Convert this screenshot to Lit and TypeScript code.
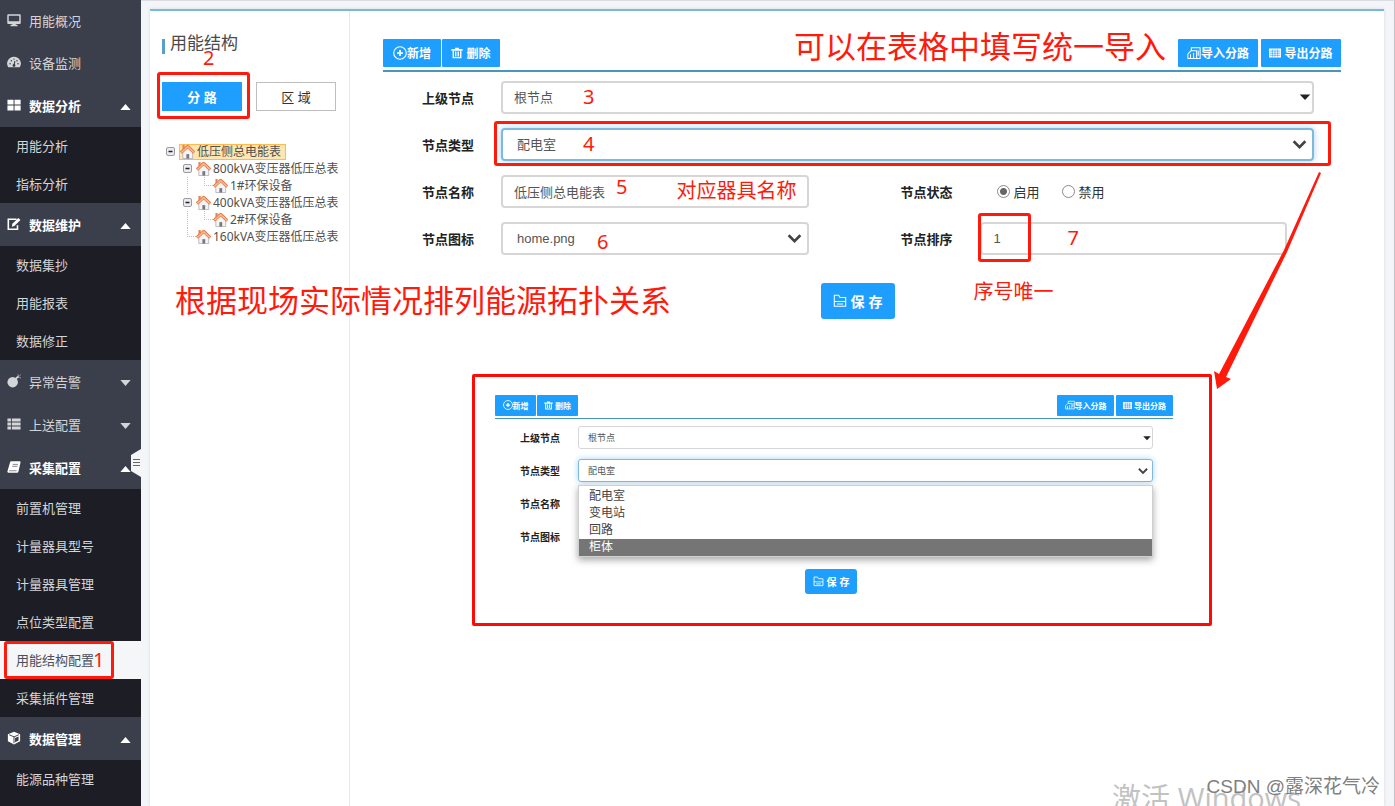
import { LitElement, html, css, svg, nothing } from "lit";
import { customElement, property } from "lit/decorators.js";
import { classMap } from "lit/directives/class-map.js";

const icons: Record<string, unknown> = {
  monitor: svg`<path d="M1.500 1.500h13a1.200 1.200 0 0 1 1.200 1.200v8.600a1.200 1.200 0 0 1-1.200 1.200h-4.500v1h2V15h-8v-1.500h2v-1H1.500A1.200 1.200 0 0 1 .3 11.300V2.700a1.200 1.200 0 0 1 1.200-1.200zM2 3.200v6.300h12V3.200z" fill="currentColor" fill-rule="evenodd"/>`,
  gauge: svg`<path d="M8 2a7.800 7.800 0 0 0-6.600 12h13.200A7.800 7.800 0 0 0 8 2z" fill="currentColor"/><path d="M8 12l1-5" stroke="#3b3e4b" stroke-width="1.300"/><circle cx="8" cy="12" r="1.600" fill="#3b3e4b"/><g fill="#3b3e4b"><circle cx="3.500" cy="10" r=".9"/><circle cx="5" cy="6.500" r=".9"/><circle cx="8" cy="4.700" r=".8"/><circle cx="11.400" cy="6.500" r=".9"/><circle cx="12.600" cy="10" r=".9"/></g>`,
  windows: svg`<path d="M.5 2h7v5.500h-7zM8.600 2h7v5.500h-7zM.5 8.700h7v5.500h-7zM8.600 8.700h7v5.500h-7z" fill="currentColor"/>`,
  edit: svg`<path d="M11 2.500H1.500v11.500H12V9.500" fill="none" stroke="currentColor" stroke-width="1.800"/><path d="M5.500 11l.6-3.200L13 1l2.400 2.400-7 7z" fill="currentColor"/>`,
  bomb: svg`<circle cx="6.500" cy="9.300" r="6" fill="currentColor"/><path d="M10 5.500l2-2 1.500-.3" fill="none" stroke="currentColor" stroke-width="2"/><path d="M12.500 .5l.5 1.500M15.500 1l-1.300 1.200M15.700 4.500l-1.500-.6" stroke="currentColor"/>`,
  list: svg`<path d="M.5 1.800H4.500v3.400h-4zM5.500 1.800h10v3.400h-10zM.5 6.300h4v3.400h-4zM5.500 6.300h10v3.400h-10zM.5 10.800h4v3.400h-4zM5.500 10.800h10v3.400h-10z" fill="currentColor"/>`,
  book: svg`<path d="M5 1.500h9.500a1 1 0 0 1 1 1.200L13 13.500a1.500 1.500 0 0 1-1.500 1H2a1.500 1.500 0 0 1-1.400-2L3.500 2.500A1.500 1.500 0 0 1 5 1.500z" fill="currentColor"/><path d="M6.500 5h6M6 7.200h6M2.500 12.300h8.500" stroke="#3b3e4b" stroke-width=".7"/>`,
  cube: svg`<path d="M8 .8l7 2.800v8.200l-7 3.600-7-3.600V3.600z" fill="currentColor"/><path d="M2.500 4.300L8 6.700l5.500-2.400M8 6.700V14" fill="none" stroke="#3b3e4b" stroke-width="1.100"/><path d="M9.200 8l4-1.800v4.600l-4 2z" fill="#3b3e4b"/>`,
  plus: svg`<circle cx="8" cy="8" r="7.200" fill="none" stroke="currentColor" stroke-width="1.300"/><path d="M8 4.700v6.600M4.700 8h6.600" stroke="currentColor" stroke-width="2"/>`,
  trash: svg`<path d="M5.500 2.500V1h5v1.500H15.500v2.500H.5V2.500z" fill="currentColor"/><path d="M3 4.500v9.700h10V4.500M6.300 6v6.500M9.700 6v6.500" fill="none" stroke="currentColor" stroke-width="1.800"/>`,
  import: svg`<path d="M5 5V2h10v12.300h-3.500M1 14.300V9l3.500-3.500H11v8.800zM4 14V9.500M7.500 14V8M12.800 5v6" fill="none" stroke="currentColor" stroke-width="1.200"/>`,
  table: svg`<path d="M0 2h16v12H0z" fill="currentColor"/><path d="M1 5.500h14M1 8.300h14M1 11.100h14M4.500 3v10M8 3v10M11.500 3v10" fill="none" stroke="#1e9fff" stroke-width=".8"/>`,
  save: svg`<path d="M1.500 14V1.500h5L8 4h6.500v10zM1.500 8.500h13M4.500 11.500h7" fill="none" stroke="currentColor" stroke-width="1.200"/>`,
  home: svg`<path d="M3 8v7.500h10.500V8L8.200 3.500z" fill="#f4f4f6" stroke="#a9a9b5" stroke-width=".8"/><path d="M6.800 15.500v-4.700h3v4.700z" fill="#77777f"/><path d="M1 9.200L8.200 2.600l7 6.600" fill="none" stroke="#dd7444" stroke-width="3.400" stroke-linejoin="round"/><path d="M1.400 8.900L8.200 2.700l6.600 6.200" fill="none" stroke="#fbb58a" stroke-width="1.800"/><path d="M2.600 1h2.400v3.400l-2.400 2z" fill="#e58554"/>`,
  down: svg`<path d="M2.500 5L8 10.500 13.500 5" fill="none" stroke="#444" stroke-width="2.500"/>`,
  caret: svg`<path d="M2 5h12l-6 6.500z" fill="#222"/>`,
};

const icon = (name: string, cls = "icon") =>
  html`<svg class=${cls} viewBox="0 0 16 16" aria-hidden="true">${icons[name]}</svg>`;

interface Group {
  icon: string;
  label: string;
  state?: "open" | "closed";
  items?: string[];
}

const MENU: Group[] = [
  { icon: "monitor", label: "用能概况" },
  { icon: "gauge", label: "设备监测" },
  { icon: "windows", label: "数据分析", state: "open", items: ["用能分析", "指标分析"] },
  { icon: "edit", label: "数据维护", state: "open", items: ["数据集抄", "用能报表", "数据修正"] },
  { icon: "bomb", label: "异常告警", state: "closed" },
  { icon: "list", label: "上送配置", state: "closed" },
  {
    icon: "book",
    label: "采集配置",
    state: "open",
    items: ["前置机管理", "计量器具型号", "计量器具管理", "点位类型配置", "用能结构配置", "采集插件管理"],
  },
  { icon: "cube", label: "数据管理", state: "open", items: ["能源品种管理"] },
];

const TREE = [
  { level: 0, label: "低压侧总电能表", branch: true },
  { level: 1, label: "800kVA变压器低压总表", branch: true },
  { level: 2, label: "1#环保设备", branch: false },
  { level: 1, label: "400kVA变压器低压总表", branch: true },
  { level: 2, label: "2#环保设备", branch: false },
  { level: 1, label: "160kVA变压器低压总表", branch: false },
];

const base = css`
  * {
    box-sizing: border-box;
  }
  button,
  input,
  select {
    font: inherit;
    margin: 0;
  }
  .icon {
    width: 14px;
    height: 14px;
    flex: none;
  }
  .box {
    position: absolute;
    border: 3px solid #ff1a0c;
    border-radius: 3px;
    pointer-events: none;
  }
  .note {
    position: absolute;
    color: #ff1a0c;
    font-family: "Noto Sans", "Noto Sans CJK SC", sans-serif;
    font-size: 20px;
    font-weight: 400;
    line-height: 28px;
    white-space: nowrap;
    pointer-events: none;
  }
`;

@customElement("side-nav")
export class SideNav extends LitElement {
  static styles = [
    base,
    css`
      :host {
        display: block;
        position: relative;
        width: 141px;
        flex: none;
        background: #1d1e25;
        font-size: 13px;
        color: #d4d5d8;
      }
      ul {
        list-style: none;
        margin: 0;
        padding: 0;
      }
      .menu > li:first-child .head {
        height: 41px;
      }
      .head {
        display: flex;
        align-items: center;
        width: 100%;
        height: 43px;
        padding: 0 10px 1px 7px;
        gap: 8px;
        border: 0;
        background: #3b3e4b;
        color: inherit;
        text-align: left;
      }
      .head.open {
        color: #fff;
        font-weight: 700;
      }
      .label {
        flex: 1;
      }
      .tri {
        width: 11px;
        height: 6px;
        margin-top: 3px;
      }
      .link {
        display: flex;
        align-items: center;
        position: relative;
        height: 38px;
        padding: 0 0 1px 16px;
        color: inherit;
        text-decoration: none;
      }
      .link.active {
        background: #f5f6f8;
        color: #4a4f5e;
      }
      .link .box {
        inset: 0 27px 0 4px;
      }
      .link .note {
        left: 93px;
        top: 5px;
      }
      .handle {
        position: absolute;
        right: 0;
        top: 449px;
        width: 10px;
        height: 28px;
        padding: 0;
        border: 0;
        background: none;
      }
      .handle svg {
        display: block;
      }
    `,
  ];

  render() {
    return html`<nav>
        <ul class="menu">
          ${MENU.map(
            (g) => html`<li>
              <button class=${classMap({ head: true, open: g.state === "open" })}>
                ${icon(g.icon)}<span class="label">${g.label}</span>
                ${g.state
                  ? html`<svg class="tri" viewBox="0 0 12 7" aria-hidden="true">
                      <path d=${g.state === "open" ? "M0 7h12L6 0z" : "M0 0h12L6 7z"} fill="currentColor" />
                    </svg>`
                  : nothing}
              </button>
              ${g.items
                ? html`<ul>
                    ${g.items.map((t) => {
                      const active = t === "用能结构配置";
                      return html`<li>
                        <a href="#" class=${classMap({ link: true, active })}
                          >${t}${active
                            ? html`<span class="box"></span><span class="note">1</span>`
                            : nothing}</a
                        >
                      </li>`;
                    })}
                  </ul>`
                : nothing}
            </li>`,
          )}
        </ul>
      </nav>
      <button class="handle" aria-label="收起菜单">
        <svg width="10" height="28" viewBox="0 0 10 28">
          <path d="M10 0v28L0 22V6z" fill="#f5f6f8" />
          <path d="M2 10.500h7M2 13.500h7M2 16.500h7" stroke="#666" />
        </svg>
      </button>`;
  }
}

@customElement("structure-tree")
export class StructureTree extends LitElement {
  static styles = [
    base,
    css`
      :host {
        display: block;
        width: 200px;
        flex: none;
        padding: 23px 0 0 12px;
        border-right: 1px solid #e9eaee;
      }
      h1 {
        display: flex;
        align-items: center;
        gap: 5px;
        margin: 0;
        font-size: 17px;
        font-weight: 400;
        line-height: 20px;
        color: #4a4a4a;
      }
      h1::before {
        content: "";
        width: 3px;
        height: 15px;
        margin-top: 4px;
        background: #5a9fc8;
      }
      .tabs {
        display: flex;
        gap: 14px;
        margin-top: 28px;
      }
      .tab {
        position: relative;
        width: 80px;
        height: 29px;
        padding: 0;
        border: 1px solid #bfbfbf;
        background: #fff;
        color: #333;
        font-size: 13px;
      }
      .tab.on {
        border-color: #1e9fff;
        background: #1e9fff;
        color: #fff;
        font-weight: 700;
      }
      .tab .box {
        inset: -11px -9px -9px -6px;
      }
      .tab .note {
        left: 40px;
        top: -39px;
      }
      ul {
        list-style: none;
        margin: 32px 0 0 4px;
        padding: 0;
        font: 12px/17px "Noto Sans", "Noto Sans CJK SC", sans-serif;
        color: #505050;
      }
      li {
        display: flex;
        align-items: center;
        height: 17px;
      }
      .pad {
        width: 17px;
        height: 17px;
        flex: none;
      }
      .pad.line {
        width: 4px;
        margin-right: 12px;
        border-right: 1px dotted #c0c0c8;
        box-sizing: content-box;
      }
      .toggle {
        width: 13px;
        height: 17px;
        flex: none;
      }
      .node {
        display: flex;
        align-items: center;
        gap: 2px;
        height: 17px;
        padding: 0 4px 0 0;
        border: 0;
        background: none;
        color: inherit;
        white-space: nowrap;
      }
      .node.sel {
        height: 16px;
        border: 1px solid #ffb951;
        padding: 0 4px 0 0;
        background: #ffe6b0;
      }
      .node .icon {
        width: 15px;
        height: 15px;
      }
    `,
  ];

  render() {
    return html`<h1>用能结构</h1>
      <div class="tabs">
        <button class="tab on">分 路<span class="box"></span><span class="note">2</span></button>
        <button class="tab">区 域</button>
      </div>
      <ul>
        ${TREE.map(
          (n) => html`<li>
            ${Array.from(
              { length: n.level },
              (_, i) => html`<span class=${classMap({ pad: true, line: n.level === 2 && i === 1 })}></span>`,
            )}
            <svg class="toggle" viewBox="0 0 13 17" aria-hidden="true">
              ${n.branch
                ? svg`<rect x=".5" y="4.500" width="8" height="8" rx="1.500" fill="#ececf0" stroke="#9a9aa2"/><path d="M2.500 8.500h4" stroke="#222" stroke-width="1.500"/>`
                : svg`<path d="M4.500 0v9M4 8.500h9" fill="none" stroke="#c0c0c8" stroke-dasharray="1 1"/>`}
            </svg>
            <button class=${classMap({ node: true, sel: n.level === 0 })}>${icon("home")}${n.label}</button>
          </li>`,
        )}
      </ul>`;
  }
}

@customElement("node-toolbar")
export class NodeToolbar extends LitElement {
  @property({ type: Boolean, reflect: true }) compact = false;

  static styles = [
    base,
    css`
      :host {
        display: flex;
        justify-content: space-between;
        padding-bottom: 3px;
        border-bottom: 2px solid #4796bd;
      }
      .group {
        display: flex;
        gap: 1px;
      }
      .group.wide {
        gap: 3px;
      }
      button {
        display: flex;
        align-items: center;
        justify-content: center;
        width: 58px;
        height: 28px;
        padding: 0 0 1px;
        border: 0;
        border-radius: 1px;
        background: #1e9fff;
        color: #fff;
        font-size: 12px;
        font-weight: 700;
        white-space: nowrap;
      }
      .wide button {
        width: 80px;
      }
      .spaced {
        gap: 3px;
      }
      .spaced .icon {
        width: 12px;
        height: 12px;
      }
      :host([compact]) {
        padding-bottom: 2px;
        border-bottom-width: 1px;
      }
      :host([compact]) button {
        width: 41px;
        height: 21px;
        font-size: 8px;
      }
      :host([compact]) .wide {
        gap: 2px;
      }
      :host([compact]) .wide button {
        width: 57px;
      }
      :host([compact]) .spaced {
        gap: 2px;
      }
      :host([compact]) .icon {
        width: 10px;
        height: 10px;
      }
      :host([compact]) .spaced .icon {
        width: 9px;
        height: 9px;
      }
    `,
  ];

  render() {
    return html`<div class="group">
        <button>${icon("plus")}新增</button>
        <button class="spaced">${icon("trash")}删除</button>
      </div>
      <div class="group wide">
        <button>${icon("import")}导入分路</button>
        <button class="spaced">${icon("table")}导出分路</button>
      </div>`;
  }
}

@customElement("app-root")
export class AppRoot extends LitElement {
  static styles = [
    base,
    css`
      :host {
        display: flex;
        position: relative;
        height: 100vh;
        overflow: hidden;
        background: #f4f5f8;
        font-family: "Liberation Sans", "Noto Sans CJK SC", sans-serif;
        font-size: 13px;
        color: #333;
      }
      .page {
        flex: 1;
        min-width: 0;
        display: flex;
        padding: 8px 10px 0 9px;
        border-top: 1px solid #dcdde2;
        border-right: 1px solid #c4c4c8;
      }
      .card {
        flex: 1;
        min-width: 0;
        display: flex;
        border-top: 2px solid #78bbd9;
        background: #fff;
        box-shadow: 0 0 3px #d5d8e0;
      }
      main {
        flex: 1;
        min-width: 0;
        position: relative;
        padding: 28px 43px 0 33px;
      }
      .form {
        display: grid;
        gap: 14px;
        margin-top: 9px;
      }
      .row {
        display: grid;
        grid-template-columns: 118px 1fr 27px;
        align-items: center;
      }
      .row.half {
        grid-template-columns: 118px 1fr 171px 1fr 54px;
      }
      .label {
        padding-right: 27px;
        text-align: right;
        font-weight: 700;
        color: #222;
      }
      .field {
        position: relative;
        height: 33px;
      }
      .control {
        display: block;
        width: 100%;
        height: 100%;
        padding: 0 12px;
        border: 2px solid #d6d6d6;
        border-radius: 4px;
        outline: 0;
        appearance: none;
        background: #fff;
        color: #555;
      }
      select.control {
        padding: 0 14px;
      }
      select.control.first,
      .control.first {
        padding: 0 11px;
      }
      .control.focus {
        border-color: #7fb9e0;
        box-shadow: 0 0 6px #a9d4f2;
      }
      .arrow {
        position: absolute;
        right: 6px;
        top: 8px;
        width: 17px;
        height: 17px;
        pointer-events: none;
      }
      .arrow.small {
        right: 2px;
        top: 9px;
        width: 14px;
        height: 14px;
      }
      .radios {
        display: flex;
        align-items: center;
        gap: 22px;
        height: 33px;
        padding-left: 17px;
      }
      .radios label {
        display: flex;
        align-items: center;
        gap: 4px;
      }
      .radios input {
        appearance: none;
        width: 13px;
        height: 13px;
        border: 1px solid #8a8a8a;
        border-radius: 50%;
        background: #fff;
      }
      .radios input:checked {
        background: radial-gradient(#666 0 3px, #fff 4px);
      }
      .save {
        display: flex;
        align-items: center;
        justify-content: center;
        gap: 4px;
        width: 74px;
        height: 36px;
        margin: 28px auto 0;
        padding: 0;
        border: 0;
        border-radius: 3px;
        background: #1e9fff;
        color: #fff;
        font-size: 14px;
        font-weight: 700;
      }
      .actions {
        padding-right: 9px;
      }
      .field .box.type {
        inset: -7px -17px -5px -7px;
      }
      .field .box.sort {
        inset: -9px auto -7px -2px;
        width: 53px;
      }
      .field .note {
        left: 82px;
        top: 2px;
      }
      .field .note.n5 {
        left: 115px;
        top: -2px;
      }
      .field .note.name {
        left: auto;
        right: 12px;
        top: 2px;
      }
      .field .note.n6 {
        left: 96px;
        top: 6px;
      }
      .field .note.n7 {
        left: 88px;
        top: 2px;
      }
      .field .note.unique {
        left: -6px;
        top: 56px;
      }
      .note.big {
        font-size: 31px;
        line-height: 44px;
      }
      .note.excel {
        right: 218px;
        top: 13px;
      }
      .note.topology {
        left: -175px;
        top: 267px;
      }
      .pointer {
        position: absolute;
        right: 62px;
        top: 161px;
        width: 110px;
        height: 220px;
        pointer-events: none;
      }
      .inset {
        margin: 55px 129px 0 89px;
        padding: 18px 36px 29px 20px;
        border: 3px solid #ff0a05;
        border-radius: 2px;
        font-size: 9px;
      }
      .inset .form {
        gap: 10px;
        margin-top: 7px;
      }
      .inset .row {
        grid-template-columns: 83px 1fr 20px;
        min-height: 23px;
      }
      .inset .label {
        padding-right: 18px;
        font-size: 10px;
      }
      .inset .field {
        height: 23px;
      }
      .inset .control {
        padding: 0 9px;
        border-width: 1px;
        border-radius: 3px;
      }
      .inset .arrow {
        right: 4px;
        top: 6px;
        width: 12px;
        height: 12px;
      }
      .inset .arrow.small {
        right: 1px;
        top: 7px;
        width: 10px;
        height: 10px;
      }
      .inset .save {
        width: 52px;
        height: 25px;
        margin-top: 21px;
        gap: 3px;
        font-size: 10px;
      }
      .inset .save .icon {
        width: 11px;
        height: 11px;
      }
      .inset .actions {
        padding-right: 6px;
      }
      .options {
        position: absolute;
        left: 0;
        right: 0;
        top: 26px;
        margin: 0;
        padding: 2px 0 0;
        list-style: none;
        border: 1px solid #d0d0d0;
        background: #fff;
        box-shadow: 0 3px 7px rgba(0, 0, 0, 0.35);
        font-size: 12px;
        line-height: 17px;
        color: #444;
      }
      .options li {
        padding-left: 10px;
      }
      .options .sel {
        background: #757575;
        color: #fff;
      }
      .activate,
      .author {
        position: absolute;
        white-space: nowrap;
        pointer-events: none;
      }
      .activate {
        right: 94px;
        bottom: -12px;
        font: 29px/40px "Open Sans", "Noto Sans CJK SC", sans-serif;
        color: #c2c2c2;
      }
      .author {
        right: 15px;
        bottom: 6px;
        font: 19px/26px "Liberation Sans", "Noto Sans CJK SC", sans-serif;
        color: #808080;
      }
    `,
  ];

  private renderForm() {
    return html`<form class="form" @submit=${(e: Event) => e.preventDefault()}>
      <div class="row">
        <label class="label" for="parent">上级节点</label>
        <div class="field">
          <select id="parent" class="control first"><option>根节点</option></select>
          ${icon("caret", "arrow small")}<span class="note">3</span>
        </div>
      </div>
      <div class="row">
        <label class="label" for="type">节点类型</label>
        <div class="field">
          <select id="type" class="control focus">
            <option>配电室</option><option>变电站</option><option>回路</option><option>柜体</option>
          </select>
          ${icon("down", "arrow")}<span class="box type"></span><span class="note">4</span>
        </div>
      </div>
      <div class="row half">
        <label class="label" for="name">节点名称</label>
        <div class="field">
          <input id="name" class="control first" value="低压侧总电能表" />
          <span class="note n5">5</span><span class="note name">对应器具名称</span>
        </div>
        <span class="label">节点状态</span>
        <div class="radios">
          <label><input type="radio" name="status" checked />启用</label>
          <label><input type="radio" name="status" />禁用</label>
        </div>
      </div>
      <div class="row half">
        <label class="label" for="icon">节点图标</label>
        <div class="field">
          <select id="icon" class="control"><option>home.png</option></select>
          ${icon("down", "arrow")}<span class="note n6">6</span>
        </div>
        <label class="label" for="sort">节点排序</label>
        <div class="field">
          <input id="sort" class="control" value="1" />
          <span class="box sort"></span><span class="note n7">7</span>
          <span class="note unique">序号唯一</span>
        </div>
      </div>
    </form>`;
  }

  private renderInset() {
    return html`<section class="inset">
      <node-toolbar compact></node-toolbar>
      <div class="form">
        <div class="row">
          <label class="label" for="parent2">上级节点</label>
          <div class="field">
            <select id="parent2" class="control"><option>根节点</option></select>
            ${icon("caret", "arrow small")}
          </div>
        </div>
        <div class="row">
          <label class="label" for="type2">节点类型</label>
          <div class="field">
            <select id="type2" class="control focus"><option>配电室</option></select>
            ${icon("down", "arrow")}
            <ul class="options">
              <li>配电室</li>
              <li>变电站</li>
              <li>回路</li>
              <li class="sel">柜体</li>
            </ul>
          </div>
        </div>
        <div class="row"><span class="label">节点名称</span></div>
        <div class="row"><span class="label">节点图标</span></div>
      </div>
      <div class="actions"><button class="save">${icon("save")}保 存</button></div>
    </section>`;
  }

  render() {
    return html`<side-nav></side-nav>
      <div class="page">
        <div class="card">
          <structure-tree></structure-tree>
          <main>
            <node-toolbar></node-toolbar>
            ${this.renderForm()}
            <div class="actions"><button class="save">${icon("save")}保 存</button></div>
            ${this.renderInset()}
            <span class="note big excel">可以在表格中填写统一导入</span>
            <span class="note big topology">根据现场实际情况排列能源拓扑关系</span>
            <svg class="pointer" viewBox="0 0 110 220" aria-hidden="true">
              <path d="M107 0l2 1L75 80 14 205l5 2-14 10L2 199l5 3L72 78z" fill="#ff1a0c" />
            </svg>
          </main>
        </div>
      </div>
      <span class="activate">激活 Windows</span>
      <span class="author">CSDN @露深花气冷</span>`;
  }
}
